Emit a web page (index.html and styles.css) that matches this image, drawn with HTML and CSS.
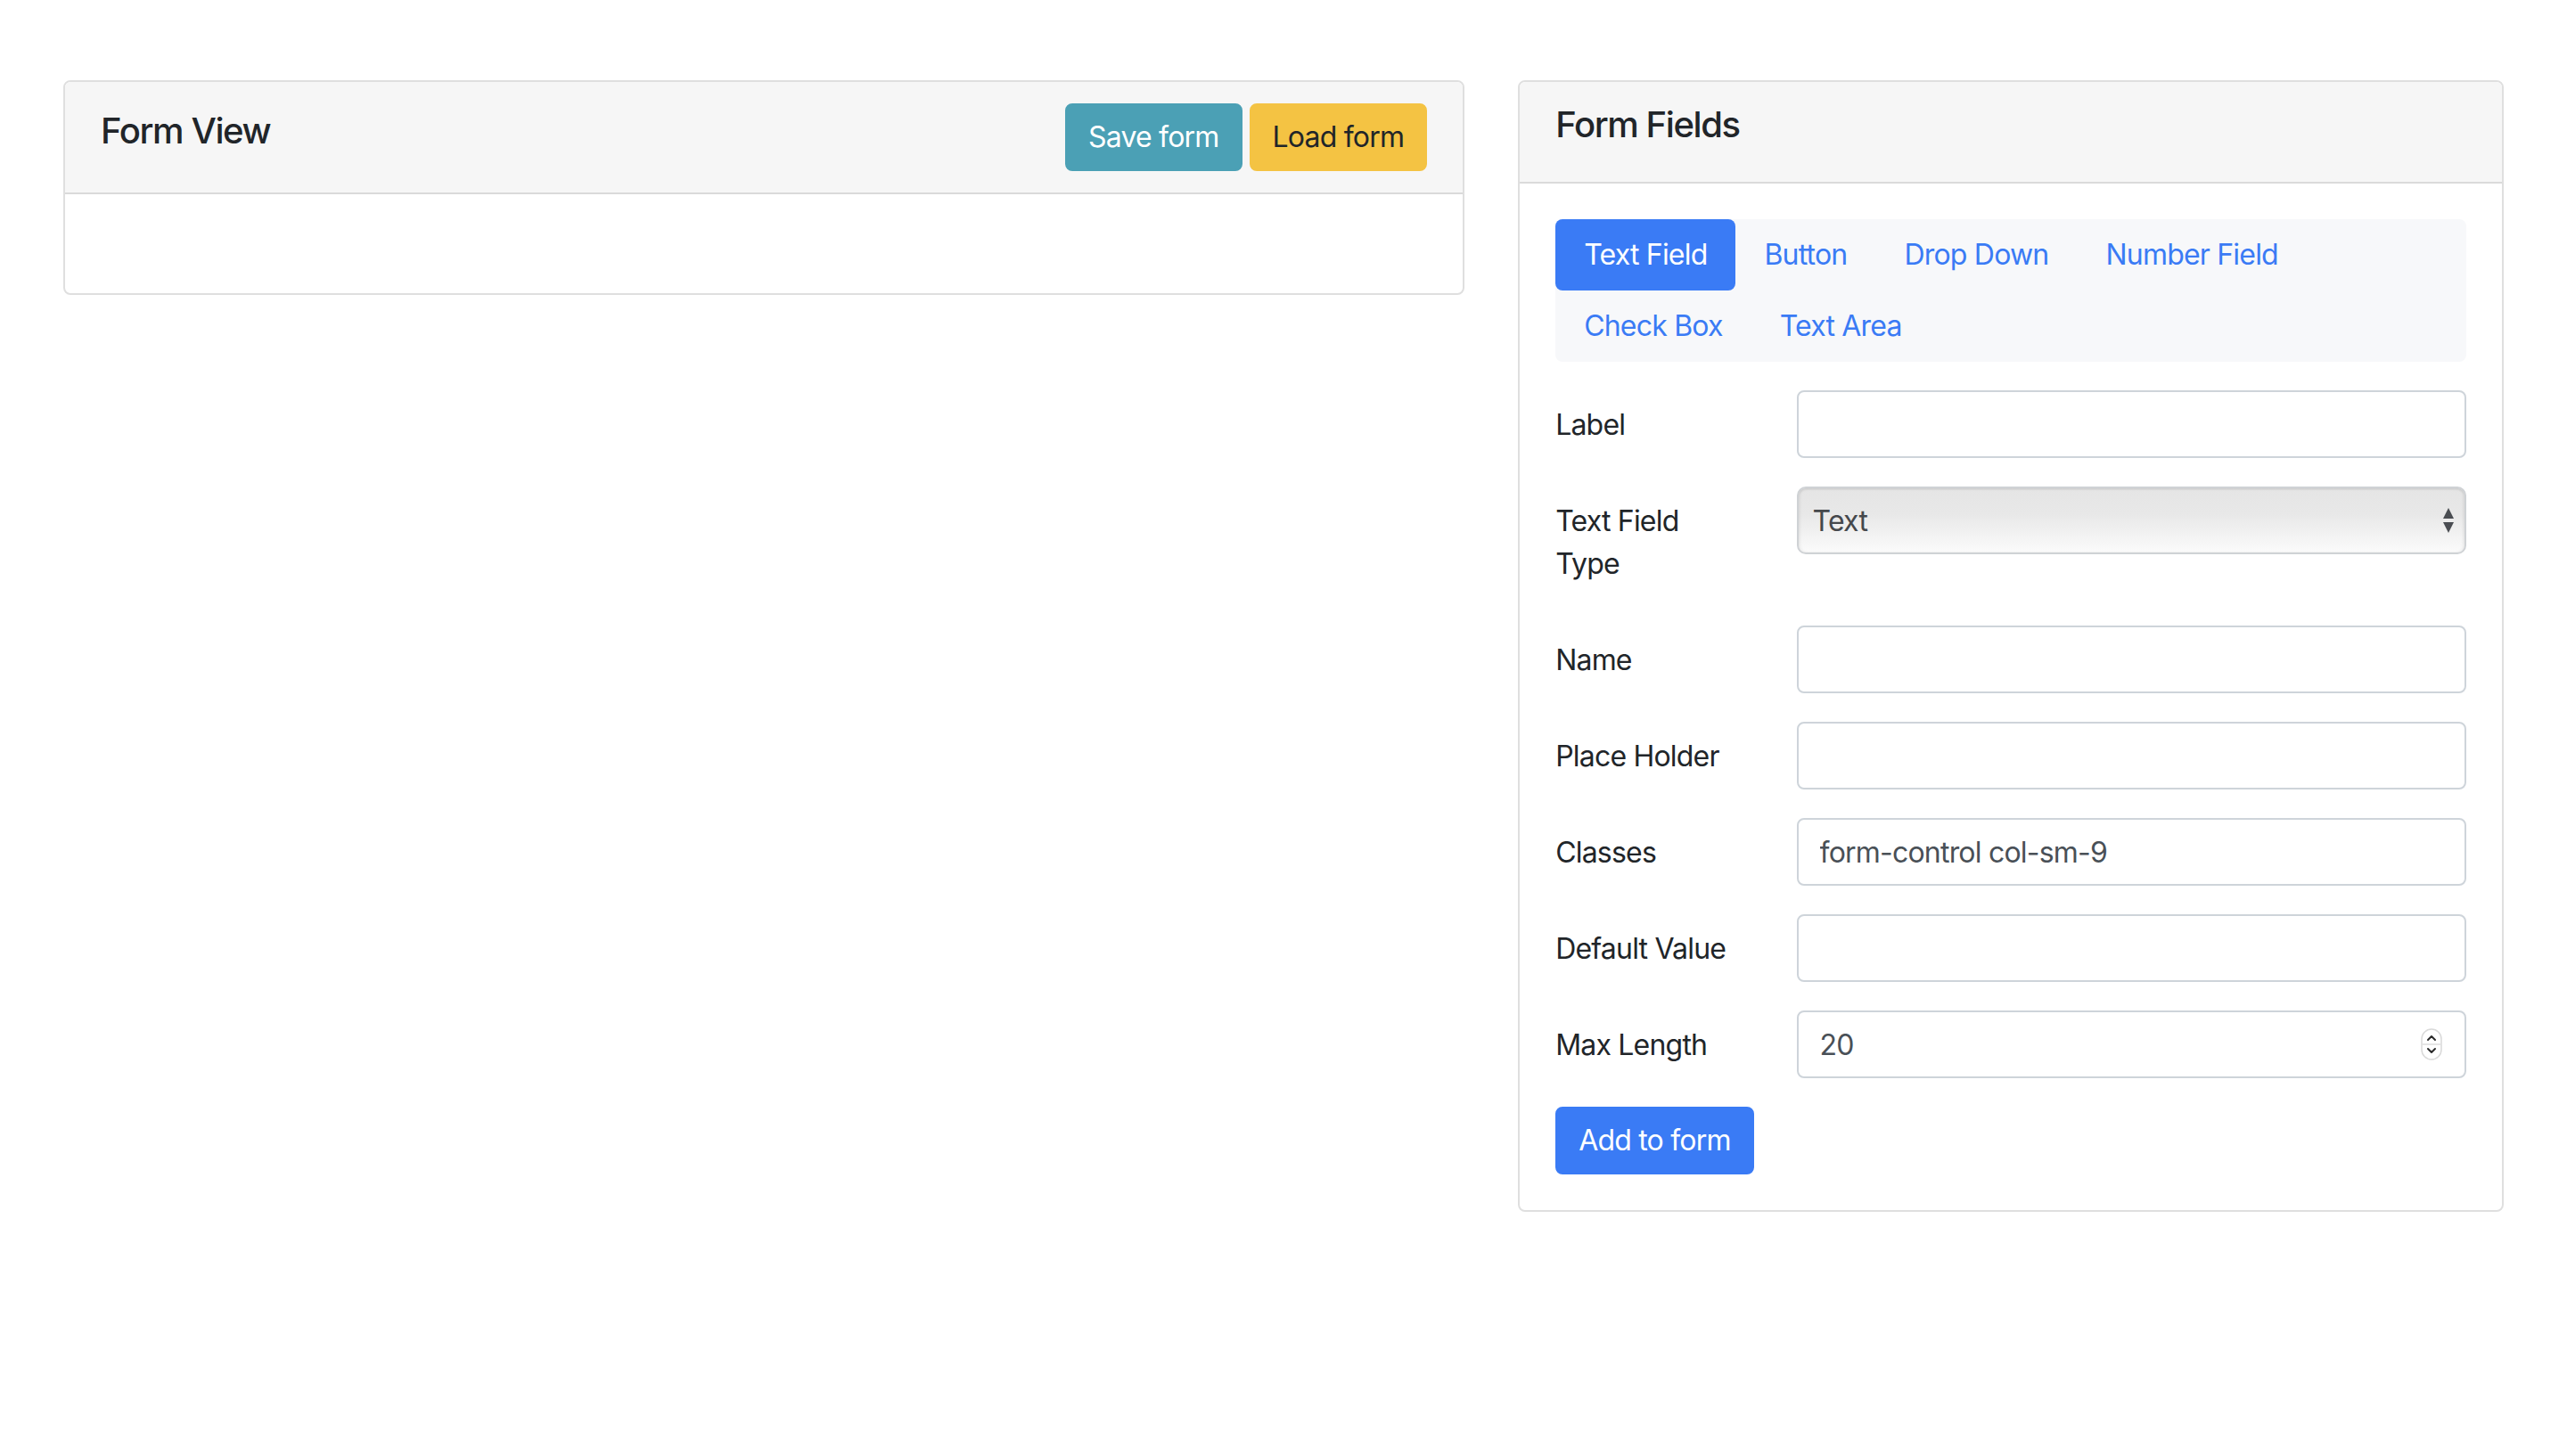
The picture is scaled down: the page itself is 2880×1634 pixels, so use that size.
FILE: index.html
```html
<!DOCTYPE html>
<html lang="en">
<head>
<meta charset="utf-8">
<title>Form Builder</title>
<link rel="stylesheet" href="styles.css">
</head>
<body>
<div class="page">
  <div class="row">
    <div class="col col-7">
      <div class="card">
        <div class="card-header header-view">
          <h5 class="card-title">Form View</h5>
          <div class="actions">
            <button class="btn btn-info" type="button">Save form</button>
            <button class="btn btn-warning" type="button">Load form</button>
          </div>
        </div>
        <div class="card-body">
          <form class="preview"></form>
        </div>
      </div>
    </div>
    <div class="col col-5">
      <div class="card">
        <div class="card-header">
          <h5 class="card-title">Form Fields</h5>
        </div>
        <div class="card-body">
          <ul class="nav-pills">
            <li><a class="nav-link active" href="#">Text Field</a></li>
            <li><a class="nav-link" href="#">Button</a></li>
            <li><a class="nav-link" href="#">Drop Down</a></li>
            <li><a class="nav-link" href="#">Number Field</a></li>
            <li><a class="nav-link" href="#">Check Box</a></li>
            <li><a class="nav-link" href="#">Text Area</a></li>
          </ul>
          <form class="field-form">
            <div class="form-row">
              <label class="col-label" for="f-label">Label</label>
              <div class="col-input"><input class="form-control" id="f-label" type="text"></div>
            </div>
            <div class="form-row">
              <label class="col-label" for="f-type">Text Field Type</label>
              <div class="col-input">
                <div class="select-wrap">
                  <select class="form-select" id="f-type">
                    <option>Text</option>
                    <option>Email</option>
                    <option>Password</option>
                  </select>
                  <svg class="select-arrows" width="14" height="28" viewBox="0 0 14 28" aria-hidden="true">
                    <polygon points="7,0 13,12 1,12" />
                    <polygon points="1,16 13,16 7,28" />
                  </svg>
                </div>
              </div>
            </div>
            <div class="form-row">
              <label class="col-label" for="f-name">Name</label>
              <div class="col-input"><input class="form-control" id="f-name" type="text"></div>
            </div>
            <div class="form-row">
              <label class="col-label" for="f-ph">Place Holder</label>
              <div class="col-input"><input class="form-control" id="f-ph" type="text"></div>
            </div>
            <div class="form-row">
              <label class="col-label" for="f-cls">Classes</label>
              <div class="col-input"><input class="form-control" id="f-cls" type="text" value="form-control col-sm-9"></div>
            </div>
            <div class="form-row">
              <label class="col-label" for="f-def">Default Value</label>
              <div class="col-input"><input class="form-control" id="f-def" type="text"></div>
            </div>
            <div class="form-row">
              <label class="col-label" for="f-max">Max Length</label>
              <div class="col-input">
                <div class="number-wrap">
                  <input class="form-control" id="f-max" type="text" value="20">
                  <span class="spinner" aria-hidden="true">
                    <svg width="24" height="36" viewBox="0 0 24 36">
                      <rect x="1" y="1" width="22" height="34" rx="11" ry="11" class="spin-box"/>
                      <line x1="2" y1="18" x2="22" y2="18" class="spin-div"/>
                      <polyline points="8,13 12,9 16,13" class="spin-chev"/>
                      <polyline points="8,23 12,27 16,23" class="spin-chev"/>
                    </svg>
                  </span>
                </div>
              </div>
            </div>
            <button class="btn btn-primary" type="button">Add to form</button>
          </form>
        </div>
      </div>
    </div>
  </div>
</div>
</body>
</html>
```

FILE: styles.css
```css
* {
  box-sizing: border-box;
}

html, body {
  margin: 0;
  padding: 0;
  background: #ffffff;
}

body {
  font-family: Inter, "Noto Sans", "Liberation Sans", sans-serif;
  font-size: 32px;
  line-height: 48px;
  letter-spacing: -0.025em;
  color: #212529;
}

.page {
  padding: 90px 41px 0;
}

.row {
  display: flex;
  align-items: flex-start;
}

.col {
  padding: 0 30px;
}

.col-7 {
  flex: 0 0 58.3333%;
  max-width: 58.3333%;
}

.col-5 {
  flex: 0 0 41.6667%;
  max-width: 41.6667%;
}

.card {
  border: 2px solid #dfdfdf;
  border-radius: 8px;
  background: #ffffff;
  overflow: hidden;
}

.card-header {
  background: #f6f6f6;
  border-bottom: 2px solid #dadada;
  padding: 24px 40px;
}

.card-title {
  margin: 0 0 16px;
  font-size: 40px;
  line-height: 48px;
  font-weight: 500;
  letter-spacing: -0.035em;
  color: #212529;
}

.header-view {
  display: flex;
  justify-content: space-between;
  align-items: center;
}

.header-view .card-title {
  margin-top: 2px;
}

.actions {
  display: flex;
  gap: 8px;
}

.card-body {
  padding: 40px;
}

.preview {
  min-height: 31px;
}

.btn {
  font-family: inherit;
  font-size: 32px;
  line-height: 48px;
  letter-spacing: -0.025em;
  padding: 12px 24px;
  border: 2px solid transparent;
  border-radius: 8px;
  cursor: pointer;
  font-weight: 400;
}

.btn-info {
  background: #4ba0b5;
  border-color: #4ba0b5;
  color: #ffffff;
}

.btn-warning {
  background: #f4c343;
  border-color: #f4c343;
  color: #212529;
}

.btn-primary {
  background: #3a7bf5;
  border-color: #3a7bf5;
  color: #ffffff;
}

.nav-pills {
  list-style: none;
  margin: 0 0 32px;
  padding: 0;
  display: flex;
  flex-wrap: wrap;
  background: #f7f8fa;
  border-radius: 8px;
}

.nav-link {
  display: block;
  padding: 16px 32px;
  color: #3a7bf5;
  text-decoration: none;
  border-radius: 8px;
}

.nav-link.active {
  background: #3a7bf5;
  color: #ffffff;
}

.form-row {
  display: flex;
  margin: 0 -30px 32px;
}

.col-label {
  flex: 0 0 25%;
  max-width: 25%;
  padding: 15px 30px 13px;
  line-height: 48px;
}

.col-input {
  flex: 0 0 75%;
  max-width: 75%;
  padding: 0 30px;
}

.form-control {
  display: block;
  width: 100%;
  height: 76px;
  padding: 12px 24px;
  font-family: inherit;
  font-size: 32px;
  line-height: 48px;
  letter-spacing: -0.025em;
  color: #495057;
  background: #ffffff;
  border: 2px solid #ced4da;
  border-radius: 8px;
  outline: none;
}

.select-wrap,
.number-wrap {
  position: relative;
}

.form-select {
  display: block;
  width: 100%;
  height: 76px;
  padding: 0 60px 0 16px;
  font-family: inherit;
  font-size: 32px;
  letter-spacing: -0.025em;
  color: #45484c;
  -webkit-appearance: none;
  appearance: none;
  background: linear-gradient(#e5e5e5 0%, #e8e8e8 40%, #f3f3f3 75%, #fbfbfb 100%);
  border: 2px solid #cfd2d5;
  border-radius: 10px;
  box-shadow: inset 0 2px 2px rgba(0, 0, 0, 0.06), inset 2px 0 3px rgba(0, 0, 0, 0.05), inset -2px 0 3px rgba(0, 0, 0, 0.05);
  outline: none;
}

.select-arrows {
  position: absolute;
  right: 13px;
  top: 24px;
  fill: #4a4d52;
  pointer-events: none;
}

.spinner {
  position: absolute;
  right: 27px;
  top: 20px;
  width: 24px;
  height: 36px;
  pointer-events: none;
}

.spinner svg {
  display: block;
}

.spin-box {
  fill: #ffffff;
  stroke: #d9d9d9;
  stroke-width: 1.5;
}

.spin-div {
  stroke: #dcdcdc;
  stroke-width: 1.5;
}

.spin-chev {
  fill: none;
  stroke: #2b2b2b;
  stroke-width: 2;
  stroke-linecap: round;
  stroke-linejoin: round;
}
```
